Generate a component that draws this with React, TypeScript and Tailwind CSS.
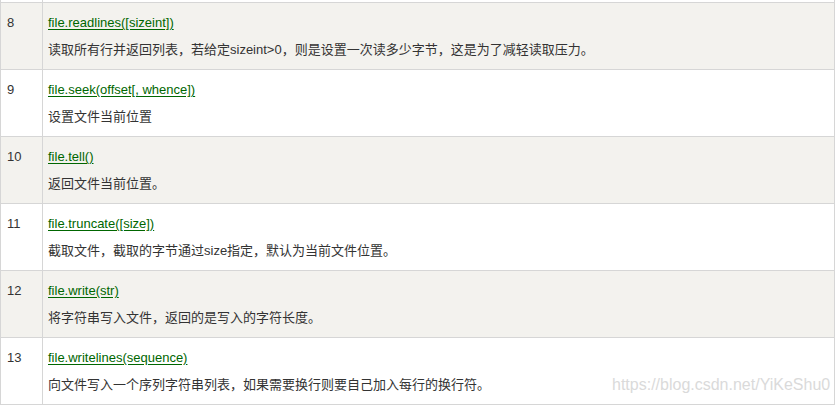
const rows = [
  { n: "8", fn: "file.readlines([sizeint])", desc: "读取所有行并返回列表，若给定sizeint>0，则是设置一次读多少字节，这是为了减轻读取压力。" },
  { n: "9", fn: "file.seek(offset[, whence])", desc: "设置文件当前位置" },
  { n: "10", fn: "file.tell()", desc: "返回文件当前位置。" },
  { n: "11", fn: "file.truncate([size])", desc: "截取文件，截取的字节通过size指定，默认为当前文件位置。" },
  { n: "12", fn: "file.write(str)", desc: "将字符串写入文件，返回的是写入的字符长度。" },
  { n: "13", fn: "file.writelines(sequence)", desc: "向文件写入一个序列字符串列表，如果需要换行则要自己加入每行的换行符。" },
];

export default function App() {
  return (
    <div
      className="w-[838px] h-[407px] bg-white overflow-hidden relative text-[13px] text-[#333]"
      style={{ fontFamily: '"Liberation Sans", Arial, "Noto Sans CJK SC", sans-serif' }}
    >
      <div className="w-[835px] border-l border-r border-b border-[#d6d6d6]">
        {/* tail of the previous row */}
        <div className="flex h-[2px] bg-white">
          <div className="w-[42px] border-r border-[#d6d6d6]" />
          <div className="flex-1" />
        </div>
        {rows.map((r, i) => (
          <div
            key={r.n}
            className={`flex h-[67px] border-t border-[#d6d6d6] ${i % 2 === 0 ? "bg-[#f3f2ee]" : "bg-white"}`}
          >
            <div className="w-[42px] shrink-0 border-r border-[#d6d6d6] pl-[6px] pt-[10px] leading-[20px]">
              {r.n}
            </div>
            <div className="flex-1 pl-[5px] pt-[10px] leading-[20px]">
              <div>
                <a className="text-[#006600] underline underline-offset-[2px] cursor-pointer">{r.fn}</a>
              </div>
              <div className="mt-[7px]">{r.desc}</div>
            </div>
          </div>
        ))}
      </div>
      {/* watermark */}
      <div className="absolute left-[612px] top-[373px] text-[16px] text-[#dadada]">
        https://blog.csdn.net/YiKeShu0
      </div>
    </div>
  );
}
